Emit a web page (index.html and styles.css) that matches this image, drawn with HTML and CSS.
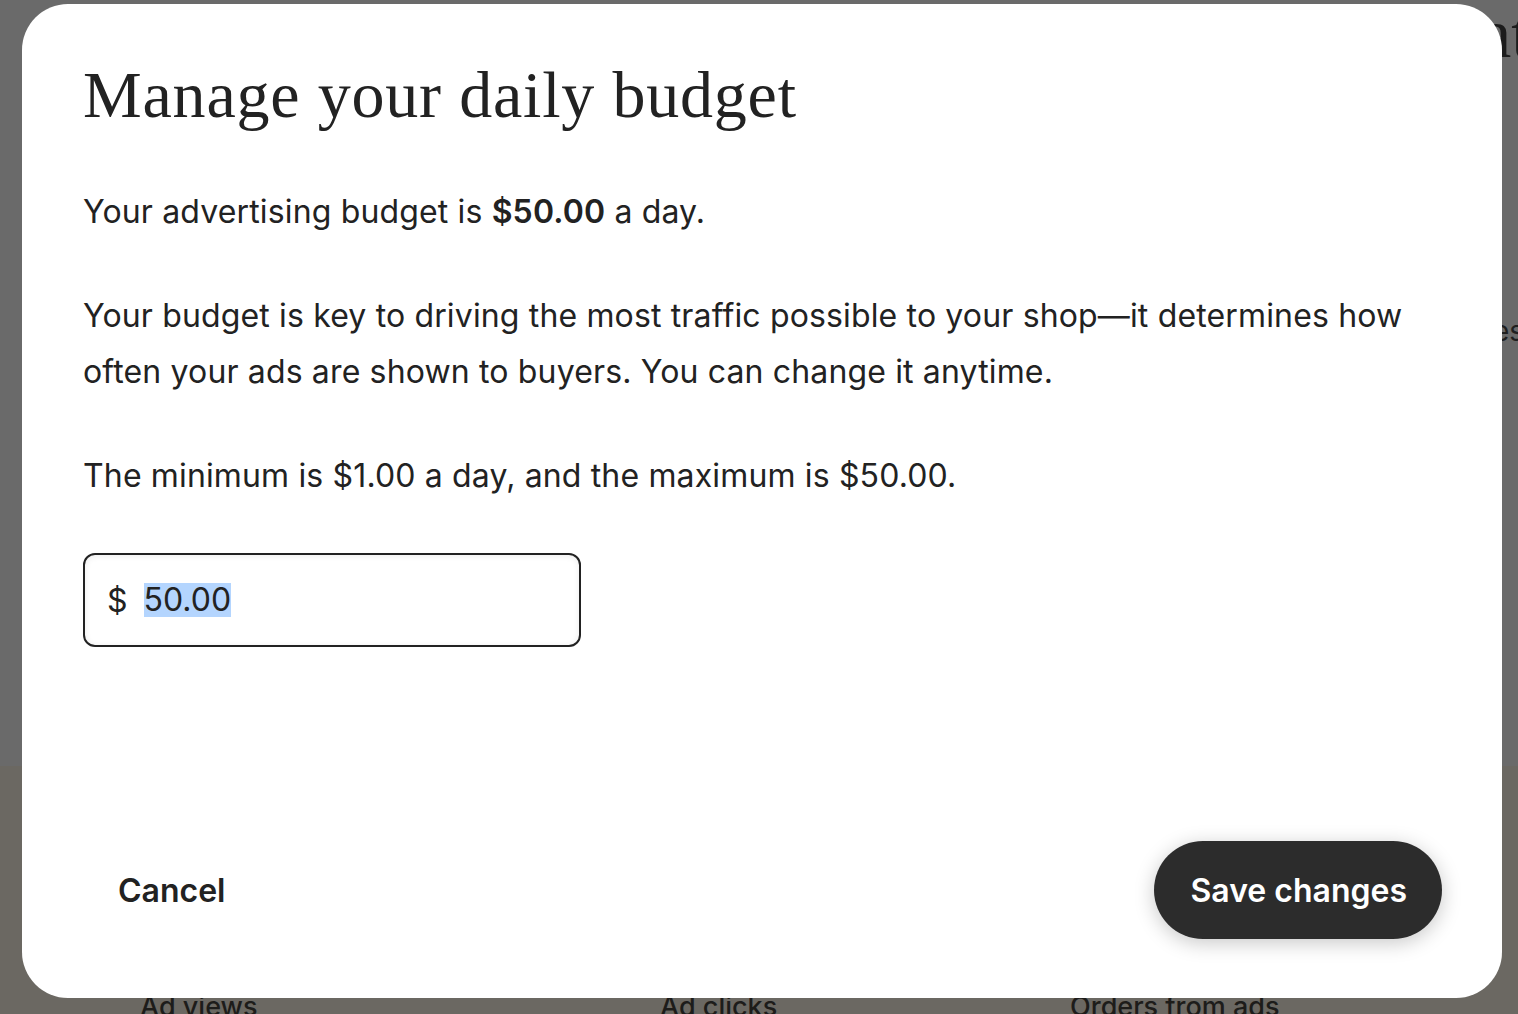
FILE: index.html
```html
<!DOCTYPE html>
<html lang="en">
<head>
<meta charset="utf-8">
<title>Manage your daily budget</title>
<link rel="stylesheet" href="styles.css">
</head>
<body>
<div class="page">
  <div class="page-top">
    <div class="page-heading">Stats</div>
    <div class="page-side">Sales</div>
  </div>
  <div class="page-bottom">
    <div class="stat">Ad views</div>
    <div class="stat">Ad clicks</div>
    <div class="stat">Orders from ads</div>
  </div>
</div>

<div class="modal" role="dialog" aria-labelledby="modal-title">
  <h1 class="modal-title" id="modal-title">Manage your daily budget</h1>
  <p class="modal-text">Your advertising budget is <strong>$50.00</strong> a day.</p>
  <p class="modal-text">Your budget is key to driving the most traffic possible to your shop—it determines how often your ads are shown to buyers. You can change it anytime.</p>
  <p class="modal-text">The minimum is $1.00 a day, and the maximum is $50.00.</p>
  <div class="budget-input">
    <span class="currency">$</span>
    <span class="selected">50.00</span>
  </div>
  <div class="modal-footer">
    <button class="btn btn-cancel" type="button">Cancel</button>
    <button class="btn btn-save" type="button">Save changes</button>
  </div>
</div>
</body>
</html>
```
FILE: styles.css
```css
* { box-sizing: border-box; }

html, body {
  margin: 0;
  padding: 0;
  height: 100%;
  overflow: hidden;
}

body {
  font-family: Inter, "Liberation Sans", sans-serif;
  color: #222222;
  background: #6b6862;
}

.page {
  display: flex;
  flex-direction: column;
  height: 1014px;
}

.page-top {
  flex: 0 0 766px;
  background: #6a6a6a;
  display: flex;
  flex-direction: column;
}

.page-heading {
  font-family: "Liberation Serif", serif;
  font-size: 70px;
  line-height: 80px;
  color: #1c1c1c;
  text-align: right;
  margin-right: -40px;
  margin-top: -6px;
}

.page-side {
  font-size: 28px;
  color: #1f1f1f;
  text-align: right;
  margin-top: 240px;
  margin-right: -6px;
}

.page-bottom {
  flex: 1 1 auto;
  background: #6b6862;
  display: grid;
  grid-template-columns: 520px 410px auto;
  padding-left: 140px;
  padding-top: 221px;
}

.stat {
  font-size: 27px;
  font-weight: 500;
  color: #1d1c1a;
  line-height: 40px;
}

.modal {
  position: fixed;
  left: 22px;
  top: 4px;
  width: 1480px;
  height: 994px;
  background: #ffffff;
  border-radius: 46px;
  padding: 51px 59px 59px 61px;
  display: flex;
  flex-direction: column;
}

.modal-title {
  font-family: "Liberation Serif", serif;
  font-weight: normal;
  font-size: 66px;
  line-height: 79px;
  margin: 0 0 50px 0;
  color: #222222;
  letter-spacing: 0.8px;
}

.modal-text {
  font-size: 32px;
  line-height: 56px;
  margin: 0 0 48px 0;
  color: #222222;
  letter-spacing: 0.15px;
}

.modal-text strong {
  font-weight: 600;
}

.budget-input {
  width: 498px;
  height: 94px;
  border: 2px solid #222222;
  border-radius: 12px;
  box-shadow: inset 0 1px 6px rgba(0, 0, 0, 0.08);
  display: flex;
  align-items: center;
  padding-left: 22px;
  font-size: 32px;
  margin-top: 1px;
}

.currency {
  margin-right: 16px;
}

.selected {
  display: inline-block;
  height: 34px;
  line-height: 34px;
  background: #b4d5fe;
}

.modal-footer {
  margin-top: auto;
  display: flex;
  justify-content: space-between;
  align-items: center;
}

.btn {
  font-family: Inter, "Liberation Sans", sans-serif;
  font-size: 32px;
  font-weight: 600;
  border: none;
  border-radius: 49px;
  height: 98px;
  padding: 0 36px;
  cursor: pointer;
}

.btn-cancel {
  background: transparent;
  color: #222222;
  margin-left: -1px;
}

.btn-save {
  background: #2c2c2c;
  color: #ffffff;
  padding: 0 35px 0 36px;
  margin-right: 1px;
  box-shadow: 0 4px 20px rgba(0, 0, 0, 0.22);
}
```
